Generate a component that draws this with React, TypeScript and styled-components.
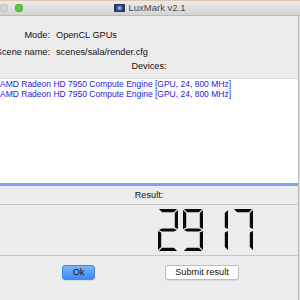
import React from "react";
import styled, { createGlobalStyle } from "styled-components";

const Global = createGlobalStyle`
  html, body { margin: 0; padding: 0; }
  body {
    width: 300px; height: 300px; overflow: hidden;
    background: #d9d9d9;
    font-family: "Liberation Sans", Arial, sans-serif;
  }
`;

const Window = styled.div`
  width: 298px;
  height: 300px;
  background: #ececec;
  border-right: 1px solid #bdbdbd;
  display: flex;
  flex-direction: column;
`;

const TitleBar = styled.div`
  height: 14px;
  border-top: 1px solid #dcc6b6;
  border-bottom: 1px solid #b9b9b9;
  background: linear-gradient(#ebebeb, #d5d5d5);
  display: grid;
  grid-template-columns: 1fr auto 1fr;
  align-items: center;
  width: 300px;
`;

const Lights = styled.div`
  display: flex;
  gap: 7px;
  align-items: center;
`;

const Light = styled.div<{ $color: string; $border: string }>`
  width: 8px;
  height: 8px;
  border-radius: 50%;
  background: ${(p) => p.$color};
  box-shadow: inset 0 0 0 0.5px ${(p) => p.$border};
`;

const Title = styled.div`
  display: flex;
  align-items: center;
  gap: 3px;
  font-size: 9.5px;
  color: #4a4a4a;
  line-height: 14px;
`;

const Form = styled.div`
  display: grid;
  grid-template-columns: 50px auto;
  column-gap: 6px;
  grid-auto-rows: 17px;
  align-items: center;
  margin-top: 10px;
  font-size: 9.2px;
  color: #111;
`;

const Label = styled.div`
  display: flex;
  justify-content: flex-end;
  white-space: nowrap;
  min-width: 0;
`;

const Value = styled.div`
  white-space: nowrap;
`;

const SectionLabel = styled.div<{ $pad?: number }>`
  text-align: center;
  font-size: 9.2px;
  line-height: 12px;
  color: #111;
  padding-top: ${(p) => p.$pad ?? 0}px;
`;

const DeviceList = styled.div`
  margin-top: 6px;
  height: 104px;
  background: #fff;
  border-top: 1px solid #dcdcdc;
  border-bottom: 3px solid #79a6ef;
`;

const DeviceRow = styled.div`
  font-size: 8.5px;
  line-height: 10px;
  color: #2323e6;
  white-space: nowrap;
`;

const LcdFrame = styled.div`
  margin-top: 3px;
  height: 50px;
  border-top: 1px solid #c6c6c6;
  border-bottom: 1px solid #c6c6c6;
  display: flex;
  justify-content: flex-end;
  align-items: center;
  padding-right: 45px;
`;

const ButtonRow = styled.div`
  display: flex;
  margin-top: 9px;
  padding-left: 62px;
  gap: 70px;
`;

const Button = styled.button<{ $primary?: boolean }>`
  height: 15px;
  padding: 0;
  width: ${(p) => (p.$primary ? 33 : 74)}px;
  border-radius: 3px;
  font-family: "Liberation Sans", Arial, sans-serif;
  font-size: 9.2px;
  color: #111;
  border: 1px solid ${(p) => (p.$primary ? "#4a86e6" : "#bdbdbd")};
  background: ${(p) =>
    p.$primary ? "linear-gradient(#78b6fd, #3d88f5)" : "#ffffff"};
  box-shadow: 0 0.5px 0.5px rgba(0, 0, 0, 0.15);
  line-height: 13px;
`;

const SEG: Record<string, string> = {
  "0": "abcdef",
  "1": "bc",
  "2": "abged",
  "3": "abgcd",
  "4": "fgbc",
  "5": "afgcd",
  "6": "afgedc",
  "7": "abc",
  "8": "abcdefg",
  "9": "abcdfg",
};

function segPolys(x0: number, w: number, h: number, t: number, g: number) {
  const m = h / 2;
  const P = (pts: number[][]) => pts.map(([x, y]) => `${x0 + x},${y}`).join(" ");
  return {
    a: P([[g, 0], [w - g, 0], [w - g - t, t], [g + t, t]]),
    d: P([[g, h], [w - g, h], [w - g - t, h - t], [g + t, h - t]]),
    f: P([[0, g], [t, g + t], [t, m - t / 2 - g], [0, m - g]]),
    e: P([[0, m + g], [t, m + t / 2 + g], [t, h - t - g], [0, h - g]]),
    b: P([[w, g], [w - t, g + t], [w - t, m - t / 2 - g], [w, m - g]]),
    c: P([[w, m + g], [w - t, m + t / 2 + g], [w - t, h - t - g], [w, h - g]]),
    g: P([
      [g, m],
      [g + t, m - t / 2],
      [w - g - t, m - t / 2],
      [w - g, m],
      [w - g - t, m + t / 2],
      [g + t, m + t / 2],
    ]),
  } as Record<string, string>;
}

const LcdNumber: React.FC<{ value: string }> = ({ value }) => {
  const w = 20;
  const h = 42;
  const pitch = 25;
  const width = pitch * (value.length - 1) + w;
  return (
    <svg width={width} height={h} viewBox={`0 0 ${width} ${h}`}>
      {value.split("").map((ch, i) => {
        const polys = segPolys(i * pitch, w, h, 3.2, 0.9);
        return SEG[ch]
          .split("")
          .map((s) => <polygon key={`${i}${s}`} points={polys[s]} fill="#0a0a0a" />);
      })}
    </svg>
  );
};

const AppIcon = () => (
  <svg width="11" height="8" viewBox="0 0 11 8">
    <rect x="0" y="0" width="11" height="8" rx="1" fill="#2d3550" />
    <rect x="2.5" y="1.5" width="6" height="5" rx="1" fill="#4b6fb8" />
    <circle cx="5.5" cy="4" r="1.6" fill="#8fb0ea" />
  </svg>
);

export default function App() {
  return (
    <>
      <Global />
      <Window>
        <TitleBar>
          <Lights>
            <Light $color="#d3d3d3" $border="#b8b8b8" />
            <Light $color="#5fc43f" $border="#4aa32f" />
          </Lights>
          <Title>
            <AppIcon />
            LuxMark v2.1
          </Title>
          <div />
        </TitleBar>
        <Form>
          <Label>Mode:</Label>
          <Value>OpenCL GPUs</Value>
          <Label>Scene name:</Label>
          <Value>scenes/sala/render.cfg</Value>
        </Form>
        <SectionLabel>Devices:</SectionLabel>
        <DeviceList>
          <DeviceRow>AMD Radeon HD 7950 Compute Engine [GPU, 24, 800 MHz]</DeviceRow>
          <DeviceRow>AMD Radeon HD 7950 Compute Engine [GPU, 24, 800 MHz]</DeviceRow>
        </DeviceList>
        <SectionLabel $pad={3}>Result:</SectionLabel>
        <LcdFrame>
          <LcdNumber value="2917" />
        </LcdFrame>
        <ButtonRow>
          <Button $primary>Ok</Button>
          <Button>Submit result</Button>
        </ButtonRow>
      </Window>
    </>
  );
}
